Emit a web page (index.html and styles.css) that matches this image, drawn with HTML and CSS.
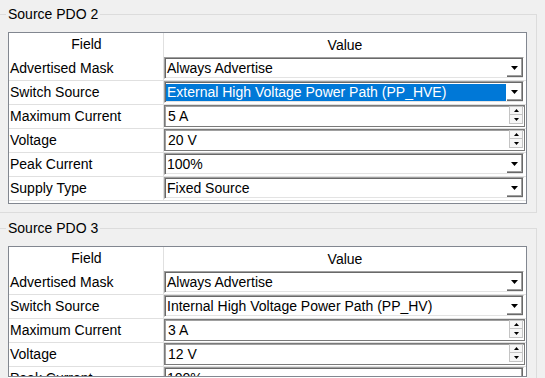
FILE: index.html
```html
<!DOCTYPE html>
<html lang="en">
<head>
  <meta charset="UTF-8">
  <title>Source PDO Settings</title>
  <link rel="stylesheet" href="styles.css">
</head>
<body>
  <fieldset class="group">
    <legend>Source PDO 2</legend>
    <div class="grid">
      <div class="row head"><div class="field">Field</div><div class="value">Value</div></div>
      <div class="row">
        <div class="field">Advertised Mask</div>
        <div class="value"><div class="combo"><span class="combo-text">Always Advertise</span><span class="drop"><svg width="7" height="4"><polygon points="0,0 7,0 3.5,4"/></svg></span></div></div>
      </div>
      <div class="row">
        <div class="field">Switch Source</div>
        <div class="value"><div class="combo"><span class="combo-text selected">External High Voltage Power Path (PP_HVE)</span><span class="drop"><svg width="7" height="4"><polygon points="0,0 7,0 3.5,4"/></svg></span></div></div>
      </div>
      <div class="row">
        <div class="field">Maximum Current</div>
        <div class="value"><div class="spin"><span class="spin-text">5 A</span><span class="spin-btns"><span class="spin-btn"><svg width="5" height="3"><polygon points="2.5,0 5,3 0,3"/></svg></span><span class="spin-btn"><svg width="5" height="3"><polygon points="0,0 5,0 2.5,3"/></svg></span></span></div></div>
      </div>
      <div class="row">
        <div class="field">Voltage</div>
        <div class="value"><div class="spin"><span class="spin-text">20 V</span><span class="spin-btns"><span class="spin-btn"><svg width="5" height="3"><polygon points="2.5,0 5,3 0,3"/></svg></span><span class="spin-btn"><svg width="5" height="3"><polygon points="0,0 5,0 2.5,3"/></svg></span></span></div></div>
      </div>
      <div class="row">
        <div class="field">Peak Current</div>
        <div class="value"><div class="combo"><span class="combo-text">100%</span><span class="drop"><svg width="7" height="4"><polygon points="0,0 7,0 3.5,4"/></svg></span></div></div>
      </div>
      <div class="row">
        <div class="field">Supply Type</div>
        <div class="value"><div class="combo"><span class="combo-text">Fixed Source</span><span class="drop"><svg width="7" height="4"><polygon points="0,0 7,0 3.5,4"/></svg></span></div></div>
      </div>
    </div>
  </fieldset>

  <fieldset class="group">
    <legend>Source PDO 3</legend>
    <div class="grid">
      <div class="row head"><div class="field">Field</div><div class="value">Value</div></div>
      <div class="row">
        <div class="field">Advertised Mask</div>
        <div class="value"><div class="combo"><span class="combo-text">Always Advertise</span><span class="drop"><svg width="7" height="4"><polygon points="0,0 7,0 3.5,4"/></svg></span></div></div>
      </div>
      <div class="row">
        <div class="field">Switch Source</div>
        <div class="value"><div class="combo"><span class="combo-text">Internal High Voltage Power Path (PP_HV)</span><span class="drop"><svg width="7" height="4"><polygon points="0,0 7,0 3.5,4"/></svg></span></div></div>
      </div>
      <div class="row">
        <div class="field">Maximum Current</div>
        <div class="value"><div class="spin"><span class="spin-text">3 A</span><span class="spin-btns"><span class="spin-btn"><svg width="5" height="3"><polygon points="2.5,0 5,3 0,3"/></svg></span><span class="spin-btn"><svg width="5" height="3"><polygon points="0,0 5,0 2.5,3"/></svg></span></span></div></div>
      </div>
      <div class="row">
        <div class="field">Voltage</div>
        <div class="value"><div class="spin"><span class="spin-text">12 V</span><span class="spin-btns"><span class="spin-btn"><svg width="5" height="3"><polygon points="2.5,0 5,3 0,3"/></svg></span><span class="spin-btn"><svg width="5" height="3"><polygon points="0,0 5,0 2.5,3"/></svg></span></span></div></div>
      </div>
      <div class="row">
        <div class="field">Peak Current</div>
        <div class="value"><div class="combo"><span class="combo-text">100%</span><span class="drop"><svg width="7" height="4"><polygon points="0,0 7,0 3.5,4"/></svg></span></div></div>
      </div>
      <div class="row">
        <div class="field">Supply Type</div>
        <div class="value"><div class="combo"><span class="combo-text">Fixed Source</span><span class="drop"><svg width="7" height="4"><polygon points="0,0 7,0 3.5,4"/></svg></span></div></div>
      </div>
    </div>
  </fieldset>

  <div class="edge"></div>
</body>
</html>
```

FILE: styles.css
```css
* { box-sizing: border-box; }
body { margin: 0; background: #f0f0f0; color: #000; font: 14px "Liberation Sans", Arial, sans-serif; overflow: hidden; }

.group { margin: 6px 0 0 -2px; width: 539px; min-width: 0; padding: 9px 9px 8px 9px; border: 1px solid #dcdcdc; }
.group + .group { margin-top: 7px; }
legend { margin-left: -2px; padding: 0 2px; line-height: 17px; }

.grid { border: 1px solid #828790; background: #fff; padding-bottom: 2px; }
.row { display: flex; height: 24px; border-bottom: 1px solid #e0e0e0; }
.row.head { border-bottom: 0; line-height: 24px; }
.field { width: 155px; padding-left: 1px; border-right: 1px solid #e0e0e0; line-height: 23px; white-space: nowrap; }
.value { flex: 1; }
.head .field, .head .value { text-align: center; }

.combo { display: flex; width: 360px; height: 22px; padding: 1px; border: 1px solid; border-color: #a0a0a0 #fff #fff #a0a0a0; box-shadow: inset 1px 1px #696969, inset -1px -1px #e3e3e3; background: #fff; }
.combo-text { flex: 1; margin: 1px 1px 0 0; padding-left: 1px; line-height: 17px; white-space: nowrap; overflow: hidden; }
.combo-text.selected { background: #0078d7; color: #fff; }
.drop { display: flex; align-items: center; justify-content: center; width: 16px; height: 18px; margin-right: -1px; background: #fff; box-shadow: inset -1px -1px #696969, inset -2px -2px #a0a0a0; }
.drop svg { margin: -1px 0 0 -1px; }

.spin { display: flex; width: 361px; height: 22px; border: 1px solid #7a7a7a; box-shadow: inset 1px 1px #a0a0a0; background: #fff; }
.spin-text { flex: 1; padding-left: 3px; line-height: 20px; }
.spin-btns { display: flex; flex-direction: column; width: 14px; margin: 0 1px 0 0; }
.spin-btn { display: flex; align-items: center; justify-content: center; height: 9px; border: 1px solid #c4c4c4; background: #f6f6f6; }
.spin-btn + .spin-btn { border-top: 0; height: 9px; }

svg polygon { fill: #000; }

.edge { position: fixed; left: 8px; bottom: 0; width: 519px; height: 2px; border-top: 1px solid #828790; background: #fff; }
```
